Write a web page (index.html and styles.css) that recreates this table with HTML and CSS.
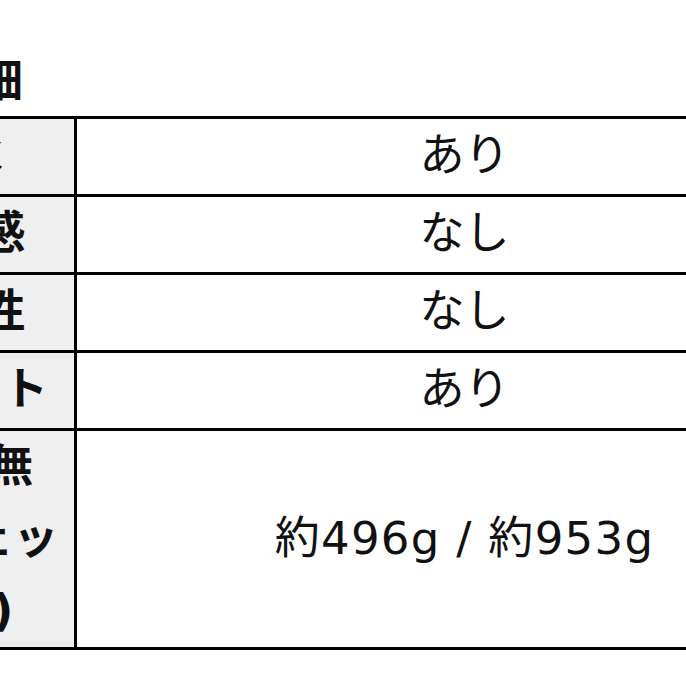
FILE: index.html
```html
<!DOCTYPE html>
<html lang="ja">
<head>
<meta charset="utf-8">
<title>商品詳細</title>
<link rel="stylesheet" href="styles.css">
</head>
<body>
<div class="sheet">
  <h2 class="title">商品詳細</h2>
  <table class="spec">
    <colgroup>
      <col class="col-label">
      <col class="col-value">
    </colgroup>
    <tbody>
      <tr>
        <th class="label">撥水</th>
        <td class="value">あり</td>
      </tr>
      <tr>
        <th class="label">清涼感</th>
        <td class="value">なし</td>
      </tr>
      <tr>
        <th class="label">速乾性</th>
        <td class="value">なし</td>
      </tr>
      <tr>
        <th class="label">ポケット</th>
        <td class="value">あり</td>
      </tr>
      <tr>
        <th class="label">袋 有無<br>(スウェッ<br>ト用)</th>
        <td class="value"><span class="num">約496g / 約953g</span></td>
      </tr>
    </tbody>
  </table>
</div>
</body>
</html>
```
FILE: styles.css
```css
html, body {
  margin: 0;
  padding: 0;
  background: #ffffff;
  overflow: hidden;
}

.sheet {
  margin-left: -161px;
  padding-top: 50px;
  color: #111111;
  font-family: "DejaVu Sans", "Noto Sans CJK JP", sans-serif;
}

.title {
  margin: 0 0 6px 0;
  font-size: 46px;
  line-height: 60px;
  font-weight: 700;
}

.spec {
  border-collapse: collapse;
  table-layout: fixed;
  width: 1013px;
}

.col-label {
  width: 235px;
}

.col-value {
  width: 778px;
}

.spec th,
.spec td {
  border: 3px solid #000000;
  padding: 1px 0 2px 0;
  font-size: 45px;
  line-height: 72px;
  text-align: center;
  vertical-align: middle;
}

.spec tr:last-child th,
.spec tr:last-child td {
  padding: 0;
}

.label {
  background: #efefef;
  font-weight: 700;
  border-right-width: 4px;
}

.value {
  background: #ffffff;
  font-weight: 400;
}

.num {
  letter-spacing: 1.3px;
}
```
